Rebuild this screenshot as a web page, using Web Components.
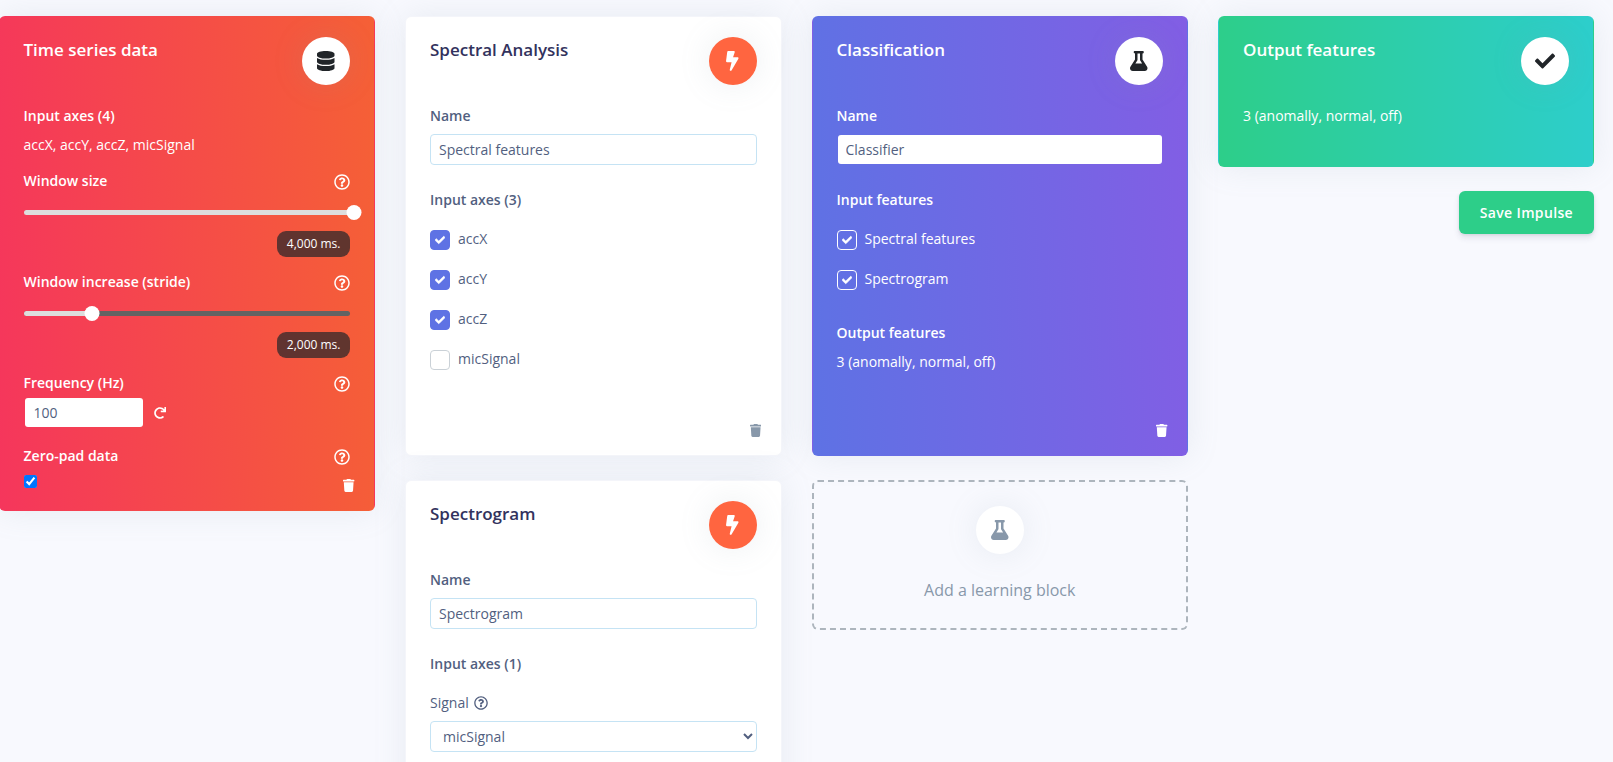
<!DOCTYPE html>
<html>
<head>
<meta charset="utf-8">
<title>Create impulse</title>
<style>
    html, body { margin: 0; height: 762px; overflow: hidden; background: #f8f9fe; }
    body { font: 14px/21px "Open Sans", "Liberation Sans", sans-serif; color: #525f7f; }
</style>
</head>
<body>

<impulse-page>
    <div>
        <impulse-card variant="red" title="Time series data" icon="database" icon-color="#212529" trash-overlap="9">
            <impulse-label text="Input axes (4)"></impulse-label>
            <impulse-text style="margin-top:8px">accX, accY, accZ, micSignal</impulse-text>
            <impulse-label text="Window size" help style="margin-top:15px"></impulse-label>
            <impulse-slider percent="100" value="4,000 ms." style="margin-top:14px"></impulse-slider>
            <impulse-label text="Window increase (stride)" help style="margin-top:14px"></impulse-label>
            <impulse-slider percent="21" value="2,000 ms." style="margin-top:14px"></impulse-slider>
            <impulse-label text="Frequency (Hz)" help style="margin-top:14px"></impulse-label>
            <impulse-frequency value="100" style="margin-top:4px"></impulse-frequency>
            <impulse-label text="Zero-pad data" help style="margin-top:17px"></impulse-label>
            <impulse-native-check style="margin-top:9px"></impulse-native-check>
        </impulse-card>
    </div>

    <div>
        <impulse-card variant="white" title="Spectral Analysis" icon="bolt" icon-color="#fff" icon-bg="#ff6540" min-height="440">
            <impulse-label text="Name"></impulse-label>
            <impulse-input value="Spectral features" style="margin-top:8px"></impulse-input>
            <impulse-label text="Input axes (3)" style="margin-top:24px"></impulse-label>
            <impulse-check checked text="accX" style="margin-top:20px"></impulse-check>
            <impulse-check checked text="accY" style="margin-top:20px"></impulse-check>
            <impulse-check checked text="accZ" style="margin-top:20px"></impulse-check>
            <impulse-check text="micSignal" style="margin-top:20px"></impulse-check>
        </impulse-card>
        <impulse-card variant="white" title="Spectrogram" icon="bolt" icon-color="#fff" icon-bg="#ff6540" min-height="420" style="margin-top:24px">
            <impulse-label text="Name"></impulse-label>
            <impulse-input value="Spectrogram" style="margin-top:8px"></impulse-input>
            <impulse-label text="Input axes (1)" style="margin-top:24px"></impulse-label>
            <impulse-signal text="Signal" value="micSignal" style="margin-top:18px"></impulse-signal>
        </impulse-card>
    </div>

    <div>
        <impulse-card variant="purple" title="Classification" icon="flask" icon-color="#212529" min-height="440">
            <impulse-label text="Name"></impulse-label>
            <impulse-input plain value="Classifier" style="margin-top:8px"></impulse-input>
            <impulse-label text="Input features" style="margin-top:24px"></impulse-label>
            <impulse-check checked outline text="Spectral features" style="margin-top:20px"></impulse-check>
            <impulse-check checked outline text="Spectrogram" style="margin-top:20px"></impulse-check>
            <impulse-label text="Output features" style="margin-top:32px"></impulse-label>
            <impulse-text style="margin-top:8px">3 (anomally, normal, off)</impulse-text>
        </impulse-card>
        <impulse-add-block text="Add a learning block" style="margin-top:24px"></impulse-add-block>
    </div>

    <div>
        <impulse-card variant="green" title="Output features" icon="check" icon-color="#212529" no-trash min-height="151">
            <impulse-text>3 (anomally, normal, off)</impulse-text>
        </impulse-card>
        <impulse-save text="Save Impulse"></impulse-save>
    </div>
</impulse-page>

<script>
const ICONS = {
    database: ['0 0 448 512', 'M448 73.143v45.714C448 159.143 347.667 192 224 192S0 159.143 0 118.857V73.143C0 32.857 100.333 0 224 0s224 32.857 224 73.143zM448 176v102.857C448 319.143 347.667 352 224 352S0 319.143 0 278.857V176c48.125 33.143 136.208 48.572 224 48.572S399.874 209.143 448 176zm0 160v102.857C448 479.143 347.667 512 224 512S0 479.143 0 438.857V336c48.125 33.143 136.208 48.572 224 48.572S399.874 369.143 448 336z'],
    bolt: ['0 0 320 512', 'M296 160H180.6l42.6-129.8C227.2 15 215.7 0 200 0H56C44 0 33.8 8.9 32.2 20.8l-32 240C-1.7 275.2 9.5 288 24 288h118.7L96.6 482.5c-3.6 15.2 8 29.5 23.3 29.5 8.4 0 16.4-4.4 20.8-12l176-304c9.3-15.9-2.2-36-20.7-36z'],
    flask: ['0 0 448 512', 'M437.2 403.5L320 215V64h8c13.3 0 24-10.7 24-24V24c0-13.3-10.7-24-24-24H120c-13.3 0-24 10.7-24 24v16c0 13.3 10.7 24 24 24h8v151L10.8 403.5C-18.5 450.6 15.3 512 70.9 512h306.2c55.7 0 89.4-61.5 60.1-108.5zM137.9 320l48.2-77.6c3.7-5.2 5.8-11.6 5.8-18.4V64h64v160c0 6.9 2.2 13.2 5.8 18.4l48.2 77.6h-172z'],
    check: ['0 0 512 512', 'M173.898 439.404l-166.4-166.4c-9.997-9.997-9.997-26.206 0-36.204l36.203-36.204c9.997-9.998 26.207-9.998 36.204 0L192 312.69 432.095 72.596c9.997-9.997 26.207-9.997 36.204 0l36.203 36.204c9.997 9.997 9.997 26.206 0 36.204l-294.4 294.401c-9.998 9.997-26.207 9.997-36.204-.001z'],
    trash: ['0 0 448 512', 'M432 32H312l-9.4-18.7A24 24 0 0 0 281.1 0H166.8a23.72 23.72 0 0 0-21.4 13.3L136 32H16A16 16 0 0 0 0 48v32a16 16 0 0 0 16 16h416a16 16 0 0 0 16-16V48a16 16 0 0 0-16-16zM53.2 467a48 48 0 0 0 47.9 45h245.8a48 48 0 0 0 47.9-45L416 128H32z'],
    help: ['0 0 512 512', 'M256 8C119.043 8 8 119.083 8 256c0 136.997 111.043 248 248 248s248-111.003 248-248C504 119.083 392.957 8 256 8zm0 448c-110.532 0-200-89.431-200-200 0-110.495 89.472-200 200-200 110.491 0 200 89.471 200 200 0 110.53-89.431 200-200 200zm107.244-255.2c0 67.052-72.421 68.084-72.421 92.863V300c0 6.627-5.373 12-12 12h-45.647c-6.627 0-12-5.373-12-12v-8.659c0-35.745 27.1-50.034 47.579-61.516 17.561-9.845 28.324-16.541 28.324-29.579 0-17.246-21.999-28.693-39.784-28.693-23.189 0-33.894 10.977-48.942 29.969-4.057 5.12-11.46 6.071-16.666 2.124l-27.824-21.098c-5.107-3.872-6.251-11.066-2.644-16.363C184.846 131.491 214.94 112 261.794 112c49.071 0 101.45 38.304 101.45 88.8zM298 368c0 23.159-18.841 42-42 42s-42-18.841-42-42 18.841-42 42-42 42 18.841 42 42z'],
    redo: ['0 0 512 512', 'M500.33 0h-47.41a12 12 0 0 0-12 12.57l4 82.76A247.42 247.42 0 0 0 256 8C119.34 8 7.9 119.53 8 256.19 8.1 393.07 119.1 504 256 504a247.1 247.1 0 0 0 166.18-63.91 12 12 0 0 0 .48-17.43l-34-34a12 12 0 0 0-16.38-.55A176 176 0 1 1 402.1 157.8l-101.53-4.87a12 12 0 0 0-12.57 12v47.41a12 12 0 0 0 12 12h200.33a12 12 0 0 0 12-12V12a12 12 0 0 0-12-12z']
};

function iconSvg(name, size, color, extra) {
    const [box, d] = ICONS[name];
    return `<svg viewBox="${box}" height="${size}" fill="${color || 'currentColor'}" style="display:block;${extra || ''}"><path d="${d}"/></svg>`;
}

class ImpulsePage extends HTMLElement {
    constructor() {
        super();
        this.attachShadow({mode: 'open'});
        this.shadowRoot.innerHTML = `
            <style>
                :host { display: block; margin-left: -1.5px; padding-top: 16px; }
                .grid { display: grid; grid-template-columns: 376.5px 376.5px 376.5px 376px; column-gap: 30px; align-items: start; }
            </style>
            <div class="grid"><slot></slot></div>`;
    }
}

const VARIANTS = {
    white: {bg: '#fff', border: '#f4f5fa', title: '#32325d', label: '#525f7f', text: '#525f7f', trash: '#8898aa'},
    red: {bg: 'linear-gradient(87deg,#f5365c,#f56036)', border: 'transparent', title: '#fff', label: '#fff', text: '#fff', trash: '#fff'},
    purple: {bg: 'linear-gradient(87deg,#5e72e4,#825ee4)', border: 'transparent', title: '#fff', label: '#fff', text: '#fff', trash: '#fff'},
    green: {bg: 'linear-gradient(87deg,#2dce89,#2dcecc)', border: 'transparent', title: '#fff', label: '#fff', text: '#fff', trash: '#fff'}
};

class ImpulseCard extends HTMLElement {
    constructor() {
        super();
        this.attachShadow({mode: 'open'});
        const v = VARIANTS[this.getAttribute('variant')];
        const bg = this.getAttribute('icon-bg') || '#fff';
        const minH = this.getAttribute('min-height');
        const overlap = this.getAttribute('trash-overlap') || 0;
        const trash = this.hasAttribute('no-trash') ? '' :
            `<div class="foot" style="margin-top:-${overlap}px">${iconSvg('trash', 13, v.trash)}</div>`;
        this.shadowRoot.innerHTML = `
            <style>
                :host {
                    display: flex; flex-direction: column; box-sizing: border-box;
                    ${minH ? `min-height:${minH}px;` : ''}
                    padding: 20px 24px 0;
                    border: 1px solid ${v.border}; border-radius: 6px;
                    background: ${v.bg};
                    box-shadow: 0 0 32px 0 rgba(136,152,170,.15);
                    --label-color: ${v.label}; --text-color: ${v.text};
                }
                .head { display: flex; justify-content: space-between; align-items: flex-start; margin-bottom: 20px; }
                h3 { margin: 1px 0 0; font-size: 17px; line-height: 24px; font-weight: 600; color: ${v.title}; }
                .circle {
                    width: 48px; height: 48px; border-radius: 50%;
                    display: flex; align-items: center; justify-content: center;
                    background: ${bg}; box-shadow: 0 0 32px 0 rgba(136,152,170,.15);
                }
                .spacer { flex: 1; }
                .foot { display: flex; justify-content: flex-end; margin-right: -4.5px; padding-bottom: 18px; }
            </style>
            <div class="head">
                <h3>${this.getAttribute('title')}</h3>
                <div class="circle">${iconSvg(this.getAttribute('icon'), 20, this.getAttribute('icon-color'))}</div>
            </div>
            <slot></slot>
            <div class="spacer"></div>
            ${trash}`;
        this.removeAttribute('title');
    }
}

class ImpulseLabel extends HTMLElement {
    constructor() {
        super();
        this.attachShadow({mode: 'open'});
        const help = this.hasAttribute('help') ? iconSvg('help', 16, null, 'margin-top:2px') : '';
        this.shadowRoot.innerHTML = `
            <style>
                :host { display: flex; justify-content: space-between; align-items: center; height: 21px;
                    font-size: 14px; font-weight: 600; color: var(--label-color); }
            </style>
            <span>${this.getAttribute('text')}</span>${help}`;
    }
}

class ImpulseText extends HTMLElement {
    constructor() {
        super();
        this.attachShadow({mode: 'open'});
        this.shadowRoot.innerHTML = `
            <style>:host { display: block; font-size: 14px; line-height: 21px; color: var(--text-color); }</style>
            <slot></slot>`;
    }
}

class ImpulseSlider extends HTMLElement {
    constructor() {
        super();
        this.attachShadow({mode: 'open'});
        const pct = this.getAttribute('percent');
        this.shadowRoot.innerHTML = `
            <style>
                :host { display: block; }
                .rail { position: relative; height: 15px; display: flex; align-items: center; }
                .track { flex: 1; height: 5px; border-radius: 3px; background: #636363; overflow: hidden; }
                .fill { height: 100%; background: #ddd; }
                .thumb { position: absolute; top: 0; width: 15px; height: 15px; border-radius: 50%; background: #fff; transform: translateX(-50%); }
                .row { display: flex; justify-content: flex-end; margin-top: 11px; }
                .pill { height: 26px; padding: 0 9.5px; border-radius: 9px; background: rgba(33,37,41,.7);
                    font-size: 12px; line-height: 26px; color: #fff; }
            </style>
            <div class="rail">
                <div class="track"><div class="fill" style="width:${pct}%"></div></div>
                <div class="thumb" style="left:calc(${pct}% + ${pct == 100 ? 4 : 0}px)"></div>
            </div>
            <div class="row"><div class="pill">${this.getAttribute('value')}</div></div>`;
    }
}

class ImpulseInput extends HTMLElement {
    constructor() {
        super();
        this.attachShadow({mode: 'open'});
        const plain = this.hasAttribute('plain');
        this.shadowRoot.innerHTML = `
            <style>
                :host { display: block; }
                input { display: block; box-sizing: border-box; width: 100%; height: 31px; padding: 0 8px; margin: 0;
                    border: 1px solid ${plain ? 'transparent' : '#c5e3f4'}; border-radius: 4px;
                    background: #fff; background-clip: padding-box; outline: none;
                    font: 14px "Open Sans", sans-serif; color: #525f7f; }
            </style>
            <input type="text" value="${this.getAttribute('value')}">`;
    }
}

class ImpulseFrequency extends HTMLElement {
    constructor() {
        super();
        this.attachShadow({mode: 'open'});
        this.shadowRoot.innerHTML = `
            <style>
                :host { display: flex; align-items: center; gap: 10px; color: #fff; }
                input { box-sizing: border-box; width: 120px; height: 31px; padding: 0 9px; margin: 0;
                    border: 1px solid transparent; border-radius: 4px; background: #fff; background-clip: padding-box; outline: none;
                    font: 14px "Open Sans", sans-serif; color: #525f7f; }
            </style>
            <input type="text" value="${this.getAttribute('value')}">${iconSvg('redo', 12)}`;
    }
}

class ImpulseNativeCheck extends HTMLElement {
    constructor() {
        super();
        this.attachShadow({mode: 'open'});
        this.shadowRoot.innerHTML = `
            <style>
                :host { display: block; height: 13px; }
                input { display: block; margin: 0; width: 13px; height: 13px; }
            </style>
            <input type="checkbox" checked>`;
    }
}

class ImpulseCheck extends HTMLElement {
    constructor() {
        super();
        this.attachShadow({mode: 'open'});
        const on = this.hasAttribute('checked');
        const outline = this.hasAttribute('outline');
        const boxCss = outline
            ? 'background: transparent; border: 1px solid #fff;'
            : on ? 'background: #5e72e4; border: 1px solid #5e72e4;' : 'background: #fff; border: 1px solid #cad1d7;';
        this.shadowRoot.innerHTML = `
            <style>
                :host { display: flex; gap: 8px; height: 20px; align-items: flex-start; color: var(--text-color); }
                .box { box-sizing: border-box; width: 20px; height: 20px; border-radius: 4px; flex: none;
                    display: flex; align-items: center; justify-content: center; color: #fff; ${boxCss} }
                svg path { stroke: currentColor; stroke-width: 30; }
                span { line-height: 20px; margin-top: -1px; }
            </style>
            <div class="box">${on ? iconSvg('check', 10) : ''}</div>
            <span>${this.getAttribute('text')}</span>`;
    }
}

class ImpulseSignal extends HTMLElement {
    constructor() {
        super();
        this.attachShadow({mode: 'open'});
        const v = this.getAttribute('value');
        this.shadowRoot.innerHTML = `
            <style>
                :host { display: block; color: var(--text-color); }
                .lab { display: flex; align-items: center; gap: 5px; height: 21px; margin-bottom: 8px; }
                select { display: block; box-sizing: border-box; width: 100%; height: 31px; margin: 0; padding: 0 8px;
                    border: 1px solid #c5e3f4; border-radius: 4px; background: #fff; outline: none;
                    font: 14px "Open Sans", sans-serif; color: #525f7f; }
            </style>
            <div class="lab"><span>${this.getAttribute('text')}</span>${iconSvg('help', 14)}</div>
            <select><option>${v}</option></select>`;
    }
}

class ImpulseAddBlock extends HTMLElement {
    constructor() {
        super();
        this.attachShadow({mode: 'open'});
        this.shadowRoot.innerHTML = `
            <style>
                :host { display: flex; flex-direction: column; align-items: center; box-sizing: border-box; height: 150px;
                    padding-top: 24px; border: 2px dashed #adb5bd; border-radius: 6px; }
                .circle { width: 48px; height: 48px; border-radius: 50%; background: #fff;
                    display: flex; align-items: center; justify-content: center;
                    box-shadow: 0 0 32px 0 rgba(136,152,170,.15); }
                p { margin: 24px 0 0; font-size: 16px; line-height: 24px; color: #8898aa; }
            </style>
            <div class="circle">${iconSvg('flask', 20, '#8898aa')}</div>
            <p>${this.getAttribute('text')}</p>`;
    }
}

class ImpulseSave extends HTMLElement {
    constructor() {
        super();
        this.attachShadow({mode: 'open'});
        this.shadowRoot.innerHTML = `
            <style>
                :host { display: flex; justify-content: flex-end; margin-top: 24px; }
                button { height: 43px; padding: 0 21px; border: 0; border-radius: 6px; background: #2dce89; color: #fff;
                    font: 600 14px "Open Sans", sans-serif; letter-spacing: .35px;
                    box-shadow: 0 4px 6px rgba(50,50,93,.11), 0 1px 3px rgba(0,0,0,.08); }
            </style>
            <button>${this.getAttribute('text')}</button>`;
    }
}

window.customElements.define('impulse-page', ImpulsePage);
window.customElements.define('impulse-card', ImpulseCard);
window.customElements.define('impulse-label', ImpulseLabel);
window.customElements.define('impulse-text', ImpulseText);
window.customElements.define('impulse-slider', ImpulseSlider);
window.customElements.define('impulse-input', ImpulseInput);
window.customElements.define('impulse-frequency', ImpulseFrequency);
window.customElements.define('impulse-native-check', ImpulseNativeCheck);
window.customElements.define('impulse-check', ImpulseCheck);
window.customElements.define('impulse-signal', ImpulseSignal);
window.customElements.define('impulse-add-block', ImpulseAddBlock);
window.customElements.define('impulse-save', ImpulseSave);
</script>
</body>
</html>
